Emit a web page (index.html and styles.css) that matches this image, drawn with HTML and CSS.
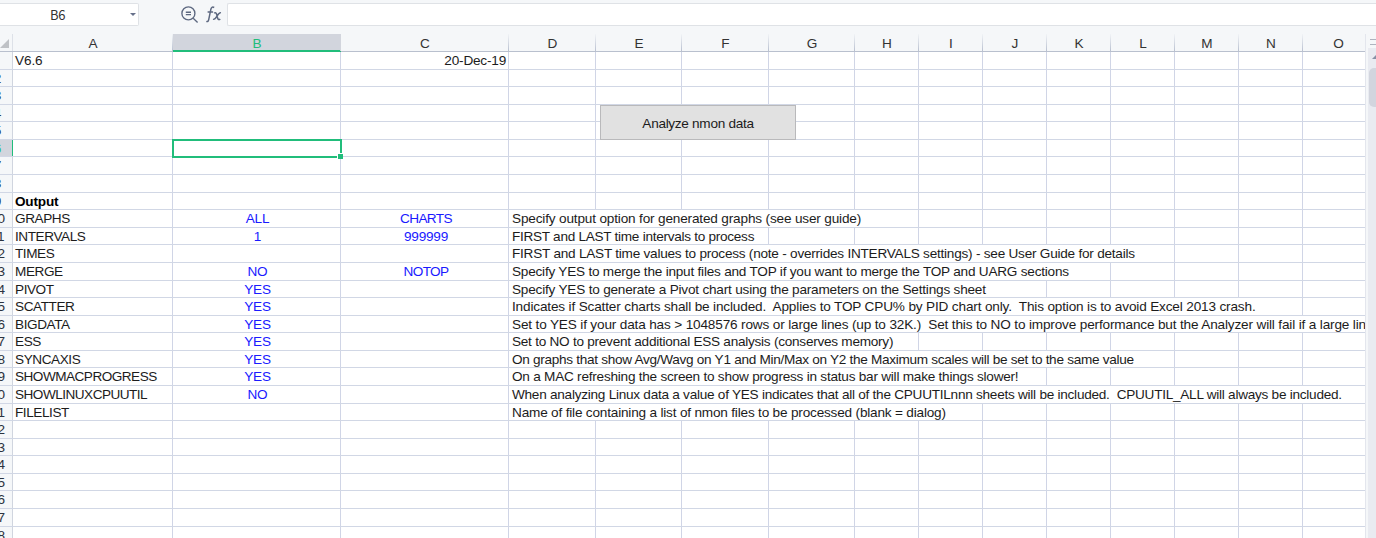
FILE: index.html
```html
<!DOCTYPE html>
<html lang="en">
<head>
<meta charset="utf-8">
<title>nmon analyser</title>
<link rel="stylesheet" href="styles.css">
</head>
<body>
<div class="toolbar">
  <div class="name-box"><span class="name">B6</span><span class="caret"></span></div>
  <div class="tools">
    <svg class="lens" width="18" height="18" viewBox="0 0 18 18"><circle cx="7.4" cy="7.4" r="6.5"/><path d="M12.2 12.2 16.6 16.4M4.8 6.2h5.2M4.8 8.6h5.2"/></svg>
    <svg class="fx" width="16" height="17" viewBox="0 0 16 17"><path d="M8.2 1.5C6.3.4 5.3 1.4 4.9 3.2L2.7 13.6C2.4 15.2 1.6 16 .3 15.4M1.6 5.9h5.5M8.1 7.1c1.5-1 2.1-.2 2.5 1.2l1 3.7c.4 1.5 1.2 2.1 2.7 1.1M14.9 6.8c-1.2-.4-2 .2-3.9 3.3-1.9 3-2.6 3.7-3.9 3.1"/></svg>
  </div>
  <div class="formula"></div>
</div>
<div class="workspace">
  <div class="sheet">
    <div class="row columns">
      <div class="corner"><span class="corner-mark"></span></div>
      <div class="col">A</div><div class="col selected">B</div><div class="col">C</div><div class="col">D</div><div class="col">E</div><div class="col">F</div><div class="col">G</div><div class="col">H</div><div class="col">I</div><div class="col">J</div><div class="col">K</div><div class="col">L</div><div class="col">M</div><div class="col">N</div><div class="col last">O</div>
    </div>
    <div class="row"><div class="head"></div><div class="cell a version">V6.6</div><div class="cell c date">20-Dec-19</div></div>
    <div class="row"><div class="head"><span>2</span></div></div>
    <div class="row"><div class="head"><span>3</span></div></div>
    <div class="row"><div class="head"><span>4</span></div></div>
    <div class="row"><div class="head"><span>5</span></div></div>
    <div class="row"><div class="head active"><span>6</span></div></div>
    <div class="row"><div class="head"><span>7</span></div></div>
    <div class="row"><div class="head"><span>8</span></div></div>
    <div class="row"><div class="head"><span>9</span></div><div class="cell a title">Output</div></div>
    <div class="row"><div class="head"><span>10</span></div><div class="cell a">GRAPHS</div><div class="cell b">ALL</div><div class="cell c caps">CHARTS</div><div class="note to-h t-17"><span>Specify output option for generated graphs (see user guide)</span></div></div>
    <div class="row"><div class="head"><span>11</span></div><div class="cell a">INTERVALS</div><div class="cell b">1</div><div class="cell c">999999</div><div class="note to-f t-28"><span>FIRST and LAST time intervals to process</span></div></div>
    <div class="row"><div class="head"><span>12</span></div><div class="cell a">TIMES</div><div class="note to-l t-24"><span>FIRST and LAST time values to process (note - overrides INTERVALS settings) - see User Guide for details</span></div></div>
    <div class="row"><div class="head"><span>13</span></div><div class="cell a">MERGE</div><div class="cell b">NO</div><div class="cell c caps">NOTOP</div><div class="note to-k t-22"><span>Specify YES to merge the input files and TOP if you want to merge the TOP and UARG sections</span></div></div>
    <div class="row"><div class="head"><span>14</span></div><div class="cell a">PIVOT</div><div class="cell b">YES</div><div class="note to-j t-21"><span>Specify YES to generate a Pivot chart using the parameters on the Settings sheet</span></div></div>
    <div class="row"><div class="head"><span>15</span></div><div class="cell a">SCATTER</div><div class="cell b">YES</div><div class="note to-n t-16"><span>Indicates if Scatter charts shall be included.  Applies to TOP CPU% by PID chart only.  This option is to avoid Excel 2013 crash.</span></div></div>
    <div class="row"><div class="head"><span>16</span></div><div class="cell a">BIGDATA</div><div class="cell b">YES</div><div class="note to-o t-16"><span>Set to YES if your data has &gt; 1048576 rows or large lines (up to 32K.)  Set this to NO to improve performance but the Analyzer will fail if a large line</span></div></div>
    <div class="row"><div class="head"><span>17</span></div><div class="cell a">ESS</div><div class="cell b">YES</div><div class="note to-h t-26"><span>Set to NO to prevent additional ESS analysis (conserves memory)</span></div></div>
    <div class="row"><div class="head"><span>18</span></div><div class="cell a">SYNCAXIS</div><div class="cell b">YES</div><div class="note to-l t-30"><span>On graphs that show Avg/Wavg on Y1 and Min/Max on Y2 the Maximum scales will be set to the same value</span></div></div>
    <div class="row"><div class="head"><span>19</span></div><div class="cell a wide">SHOWMACPROGRESS</div><div class="cell b">YES</div><div class="note to-j t-24"><span>On a MAC refreshing the screen to show progress in status bar will make things slower!</span></div></div>
    <div class="row"><div class="head"><span>20</span></div><div class="cell a wide">SHOWLINUXCPUUTIL</div><div class="cell b">NO</div><div class="note to-o t-26"><span>When analyzing Linux data a value of YES indicates that all of the CPUUTILnnn sheets will be included.  CPUUTIL_ALL will always be included.</span></div></div>
    <div class="row"><div class="head"><span>21</span></div><div class="cell a">FILELIST</div><div class="note to-i t-19"><span>Name of file containing a list of nmon files to be processed (blank = dialog)</span></div></div>
    <div class="row"><div class="head"><span>22</span></div></div>
    <div class="row"><div class="head"><span>23</span></div></div>
    <div class="row"><div class="head"><span>24</span></div></div>
    <div class="row"><div class="head"><span>25</span></div></div>
    <div class="row"><div class="head"><span>26</span></div></div>
    <div class="row"><div class="head"><span>27</span></div></div>
    <div class="row"><div class="head"><span>28</span></div></div>
    <button class="analyze">Analyze nmon data</button>
    <div class="selection"></div>
  </div>
  <div class="scroll">
    <div class="split"></div>
    <div class="track"><span class="up"></span><div class="thumb"></div></div>
  </div>
</div>
</body>
</html>
```

FILE: styles.css
```css
* { box-sizing: border-box; }
body {
  margin: 0;
  height: 538px;
  overflow: hidden;
  background: #f5f7f9;
  color: #1c1c1c;
  font-family: "Liberation Sans", Arial, sans-serif;
  font-size: 13.6px;
}
.toolbar { display: flex; height: 34px; padding-top: 3px; }
.name-box {
  display: flex;
  align-items: center;
  width: 139px;
  height: 23px;
  background: #fff;
  border: 1px solid #dfe2e6;
  border-left: 0;
  border-radius: 0 2px 2px 0;
}
.name {
  width: 115px;
  padding-top: 1px;
  text-align: center;
  font: 13px/20px "Noto Sans CJK SC", sans-serif;
  letter-spacing: -0.3px;
  color: #333;
}
.caret { margin-left: 15px; border: 3px solid transparent; border-top: 3px solid #66708a; border-bottom: 0; }
.tools { display: flex; gap: 7px; flex: none; width: 88px; padding: 3px 0 0 42px; }
.tools svg { flex: none; fill: none; stroke: #5d6880; stroke-width: 1.35; }
.tools .fx { stroke-width: 1.5; }
.formula { flex: 1; height: 23px; background: #fff; border: 1px solid #dfe2e6; border-right: 0; border-radius: 2px 0 0 2px; }
.workspace { display: flex; height: 504px; }
.sheet { position: relative; flex: none; width: 1366px; overflow: hidden; border-right: 1px solid #e3e6ed; }
.row {
  --line: linear-gradient(#d0d5e6, #d0d5e6);
  display: grid;
  grid-template-columns: 13px 160px 168px 168px 87px 86px 87px 86px repeat(7, 64px) 62px;
  grid-template-rows: 100%;
  height: 17.59px;
  border-bottom: 1px solid #d1d7e5;
  background:
    var(--line) 172px 0 / 1px 100%, var(--line) 340px 0 / 1px 100%,
    var(--line) 508px 0 / 1px 100%, var(--line) 595px 0 / 1px 100%,
    var(--line) 681px 0 / 1px 100%, var(--line) 768px 0 / 1px 100%,
    var(--line) 854px 0 / 1px 100%, var(--line) 918px 0 / 1px 100%,
    var(--line) 982px 0 / 1px 100%, var(--line) 1046px 0 / 1px 100%,
    var(--line) 1110px 0 / 1px 100%, var(--line) 1174px 0 / 1px 100%,
    var(--line) 1238px 0 / 1px 100%, var(--line) 1302px 0 / 1px 100%,
    #fff;
  background-repeat: no-repeat;
  line-height: 18px;
}
.columns { height: 18px; background: #f5f7f9; border-bottom-color: #b9c0ce; }
.corner { display: flex; align-items: flex-end; padding-bottom: 3px; border-right: 1px solid #dde1e8; }
.corner-mark { border-left: 9px solid transparent; border-bottom: 9px solid #bfc2c6; }
.col {
  padding-left: 1px;
  border-right: 1px solid;
  border-image: linear-gradient(#f5f7f9, #b5bdce) 1;
  text-align: center;
  line-height: 19px;
  color: #333;
}
.col.last { padding-left: 9px; border: 0; }
.col.selected { background: #d2d5dd; color: #21bd7b; border-image: none; border-color: #d2d5dd; box-shadow: inset 0 -1px #21bd7b, 0 1px #21bd7b; }
.head {
  grid-column: 1;
  overflow: hidden;
  background: #f5f7f9;
  border-right: 1px solid #d0d5df;
  color: #2c3340;
}
.head span { display: block; width: 30px; margin-left: -17.5px; text-align: center; }
.head.active { background: #d2d5dd; color: #21bd7b; border-right-color: #21bd7b; }
.cell { white-space: nowrap; }
.a { grid-column: 2; padding-left: 2px; letter-spacing: -0.43px; }
.wide { letter-spacing: -0.52px; }
.b { grid-column: 3; padding-left: 1px; text-align: center; color: #1a1aff; letter-spacing: -0.2px; }
.c { grid-column: 4; padding-left: 2px; text-align: center; color: #1a1aff; letter-spacing: -0.2px; }
.caps { letter-spacing: -0.6px; }
.version { letter-spacing: -0.1px; }
.date { text-align: right; padding-right: 3px; color: #1c1c1c; }
.title { font-weight: bold; color: #000; letter-spacing: -0.2px; }
.note { height: 16.6px; padding-left: 3px; background: #fff; white-space: pre; border-right: 1px solid #d0d5e6; }
.t-16 { letter-spacing: -0.16px; }
.t-17 { letter-spacing: -0.167px; }
.t-19 { letter-spacing: -0.19px; }
.t-21 { letter-spacing: -0.205px; }
.t-22 { letter-spacing: -0.222px; }
.t-24 { letter-spacing: -0.235px; }
.t-26 { letter-spacing: -0.258px; }
.t-28 { letter-spacing: -0.28px; }
.t-30 { letter-spacing: -0.296px; }
.to-f { grid-column: 5 / 8; }
.to-h { grid-column: 5 / 10; }
.to-i { grid-column: 5 / 11; }
.to-j { grid-column: 5 / 12; }
.to-k { grid-column: 5 / 13; }
.to-l { grid-column: 5 / 14; }
.to-n { grid-column: 5 / 16; }
.to-o { grid-column: 5 / 17; border-right: 0; }
.analyze {
  position: absolute;
  left: 600px;
  top: 71px;
  width: 196px;
  height: 35px;
  padding: 2px 0 0;
  background: #e1e1e1;
  border: 1px solid #b9b9bb;
  font: 13.6px "Liberation Sans", Arial, sans-serif;
  letter-spacing: -0.3px;
  color: #1c1c1c;
}
.selection { position: absolute; left: 172px; top: 105px; width: 170px; height: 19px; border: 2px solid #21bd7b; }
.selection::after { content: ""; position: absolute; right: -3px; bottom: -3px; width: 5px; height: 5px; background: #21bd7b; border: solid #fff; border-width: 1px 0 0 1px; }
.scroll { flex: none; width: 10px; padding-left: 2px; overflow: hidden; }
.split { height: 14px; padding-top: 5px; }
.split::before { content: ""; display: block; height: 4px; margin-left: 2px; border: solid #aeb4bf; border-width: 1px 0; }
.track { height: 490px; background: #e9ebf1; padding: 7px 0 0 1px; }
.up { display: block; width: 8px; margin-left: 3px; border: 4px solid transparent; border-top: 0; border-bottom: 4px solid #8790a5; }
.thumb { height: 39px; margin-top: 9px; background: #d2d5de; border-radius: 5px 0 0 5px; }
```
